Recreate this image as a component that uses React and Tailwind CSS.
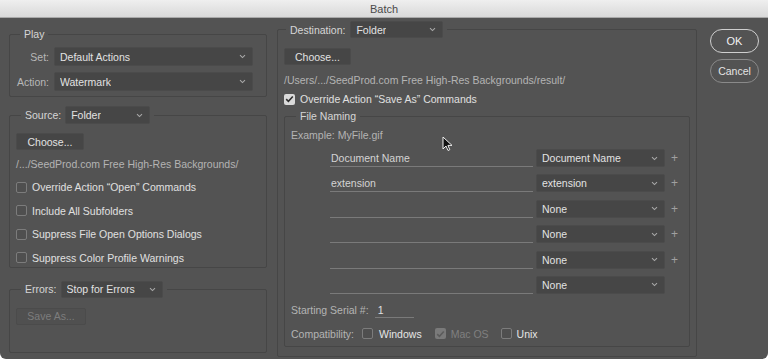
import React from 'react';

const Chevron = () => (
  <svg width="7" height="5" viewBox="0 0 7 5" className="shrink-0">
    <path d="M1 1.2 L3.5 3.6 L6 1.2" fill="none" stroke="#a8a8a8" strokeWidth="1.1" />
  </svg>
);

const Select = ({ value, className = '' }) => (
  <div className={`flex items-center justify-between bg-[#464646] border border-[#4b4b4b] rounded-[2px] pl-[5px] pr-[6px] text-[#e2e2e2] ${className}`}>
    <span className="truncate">{value}</span>
    <Chevron />
  </div>
);

const Btn = ({ children, className = '', disabled }) => (
  <div
    className={`flex items-center justify-center rounded-[2px] border ${
      disabled ? 'border-[#4b4b4b] bg-[#505050] text-[#7d7d7d]' : 'border-[#4b4b4b] bg-[#464646] text-[#e2e2e2]'
    } ${className}`}
  >
    {children}
  </div>
);

const Check = ({ checked, disabled }) => {
  if (checked) {
    return (
      <div className={`w-[11px] h-[11px] rounded-[2px] flex items-center justify-center shrink-0 ${disabled ? 'bg-[#7a7a7a]' : 'bg-[#dadada]'}`}>
        <svg width="9" height="8" viewBox="0 0 9 8">
          <path d="M1.2 4.2 L3.4 6.3 L7.8 1.5" fill="none" stroke={disabled ? '#5c5c5c' : '#2e2e2e'} strokeWidth="1.6" />
        </svg>
      </div>
    );
  }
  return <div className="w-[11px] h-[11px] rounded-[2px] border border-[#7c7c7c] bg-[#4f4f4f] shrink-0" />;
};

const CheckRow = ({ label, checked }) => (
  <div className="flex items-center h-[14px] gap-[5px]">
    <Check checked={checked} />
    <span className="text-[#e0e0e0]">{label}</span>
  </div>
);

const NameRow = ({ text, option, plus = true }) => (
  <div className="flex items-center h-[18px] pl-[45px]">
    <div className="w-[203px] h-[18px] border-b border-[#7a7a7a] pl-[1px] flex items-center text-[#d4d4d4]">{text}</div>
    <Select value={option} className="ml-[3px] w-[129px] h-[18px]" />
    {plus && <span className="ml-[6px] text-[#a0a0a0] text-[12px] leading-none">+</span>}
  </div>
);

export default function App() {
  return (
    <div className="relative w-[768px] h-[361px] bg-white overflow-hidden text-[10.5px] leading-[14px]" style={{ fontFamily: '"Liberation Sans", Arial, sans-serif' }}>
      <div className="h-[359px] bg-[#535353] rounded-b-[6px] flex flex-col">
        {/* title bar */}
        <div className="h-[18px] shrink-0 bg-gradient-to-b from-[#efefef] to-[#d9d9d9] border-b border-[#a9a9a9] flex items-center justify-center">
          <span className="text-[11px] text-[#4a4a4a]">Batch</span>
        </div>

        <div className="flex pl-[9px]">
          {/* left column */}
          <div className="w-[258px] flex flex-col">
            <fieldset className="mt-[9px] border border-[#464646] rounded-[2px]">
              <legend className="ml-[10px] px-[4px] text-[#d6d6d6]">Play</legend>
              <div className="pt-[6px] pb-[5px] flex flex-col gap-[6px]">
                <div className="flex items-center">
                  <span className="w-[39px] text-right text-[#b8b8b8]">Set:</span>
                  <Select value="Default Actions" className="ml-[5px] w-[199px] h-[19px]" />
                </div>
                <div className="flex items-center">
                  <span className="w-[39px] text-right text-[#b8b8b8]">Action:</span>
                  <Select value="Watermark" className="ml-[5px] w-[199px] h-[19px]" />
                </div>
              </div>
            </fieldset>

            <fieldset className="mt-[9px] border border-[#464646] rounded-[2px]">
              <legend className="ml-[11px] px-[4px]">
                <div className="flex items-center gap-[4px]">
                  <span className="text-[#d6d6d6]">Source:</span>
                  <Select value="Folder" className="w-[85px] h-[18px]" />
                </div>
              </legend>
              <div className="px-[6px] pt-[9px] pb-[2px]">
                <Btn className="w-[68px] h-[17px]">Choose...</Btn>
                <div className="mt-[7px] text-[#b4b4b4]">/.../SeedProd.com Free High-Res Backgrounds/</div>
                <div className="mt-[9px] flex flex-col gap-[9.67px]">
                  <CheckRow label={'Override Action \u201COpen\u201D Commands'} />
                  <CheckRow label="Include All Subfolders" />
                  <CheckRow label="Suppress File Open Options Dialogs" />
                  <CheckRow label="Suppress Color Profile Warnings" />
                </div>
              </div>
            </fieldset>

            <fieldset className="mt-[13px] border border-[#464646] rounded-[2px]">
              <legend className="ml-[11px] px-[4px]">
                <div className="flex items-center gap-[4px]">
                  <span className="text-[#d6d6d6]">Errors:</span>
                  <Select value="Stop for Errors" className="w-[102px] h-[17px]" />
                </div>
              </legend>
              <div className="px-[6px] pt-[10px] pb-[27px]">
                <Btn disabled className="w-[70px] h-[17px]">Save As...</Btn>
              </div>
            </fieldset>
          </div>

          {/* middle column */}
          <fieldset className="ml-[10px] mt-[3px] w-[420px] self-start border border-[#464646] rounded-[2px]">
            <legend className="ml-[8px] px-[4px]">
              <div className="flex items-center gap-[5px]">
                <span className="text-[#d6d6d6]">Destination:</span>
                <Select value="Folder" className="w-[93px] h-[17px]" />
              </div>
            </legend>
            <div className="px-[6px] pt-[10px] pb-[9px]">
              <Btn className="w-[67px] h-[17px]">Choose...</Btn>
              <div className="mt-[8px] text-[#b4b4b4]">/Users/.../SeedProd.com Free High-Res Backgrounds/result/</div>
              <div className="mt-[5px]">
                <CheckRow checked label={'Override Action \u201CSave As\u201D Commands'} />
              </div>

              <fieldset className="mt-[3px] border border-[#464646] rounded-[2px]">
                <legend className="ml-[11px] px-[4px] text-[#d6d6d6]">File Naming</legend>
                <div className="pt-[5px] pb-[5px]">
                  <div className="pl-[6px] text-[#b4b4b4]">Example: MyFile.gif</div>
                  <div className="mt-[7px] flex flex-col gap-[7.4px]">
                    <NameRow text="Document Name" option="Document Name" />
                    <NameRow text="extension" option="extension" />
                    <NameRow text="" option="None" />
                    <NameRow text="" option="None" />
                    <NameRow text="" option="None" />
                    <NameRow text="" option="None" plus={false} />
                  </div>
                  <div className="mt-[9px] pl-[6px] flex items-center h-[14px]">
                    <span className="text-[#b4b4b4]">Starting Serial #:</span>
                    <div className="ml-[6px] w-[39px] h-[15px] border-b border-[#7a7a7a] pl-[3px] text-[#e0e0e0] mt-[1px]">1</div>
                  </div>
                  <div className="mt-[10px] pl-[6px] flex items-center h-[14px]">
                    <span className="text-[#b4b4b4]">Compatibility:</span>
                    <div className="ml-[8px] flex items-center gap-[6px]">
                      <Check />
                      <span className="text-[#e6e6e6]">Windows</span>
                    </div>
                    <div className="ml-[13px] flex items-center gap-[5px]">
                      <Check checked disabled />
                      <span className="text-[#808080]">Mac OS</span>
                    </div>
                    <div className="ml-[12px] flex items-center gap-[5px]">
                      <Check />
                      <span className="text-[#e6e6e6]">Unix</span>
                    </div>
                  </div>
                </div>
              </fieldset>
            </div>
          </fieldset>

          {/* right column */}
          <div className="ml-[13px] w-[49px] flex flex-col">
            <div className="mt-[11px] h-[24px] rounded-full border-[1.5px] border-[#cfcfcf] flex items-center justify-center text-[11px] text-[#f2f2f2]">OK</div>
            <div className="mt-[6px] h-[24px] rounded-full border border-[#8a8a8a] flex items-center justify-center text-[#e4e4e4]">Cancel</div>
          </div>
        </div>
      </div>

      {/* mouse pointer */}
      <svg className="absolute left-[442px] top-[136px]" width="11" height="16" viewBox="0 0 11 16">
        <path d="M1 1 L1 13 L4 10 L6 14.5 L7.8 13.7 L5.9 9.4 L10 9.4 Z" fill="#111" stroke="#eee" strokeWidth="1" />
      </svg>
    </div>
  );
}
